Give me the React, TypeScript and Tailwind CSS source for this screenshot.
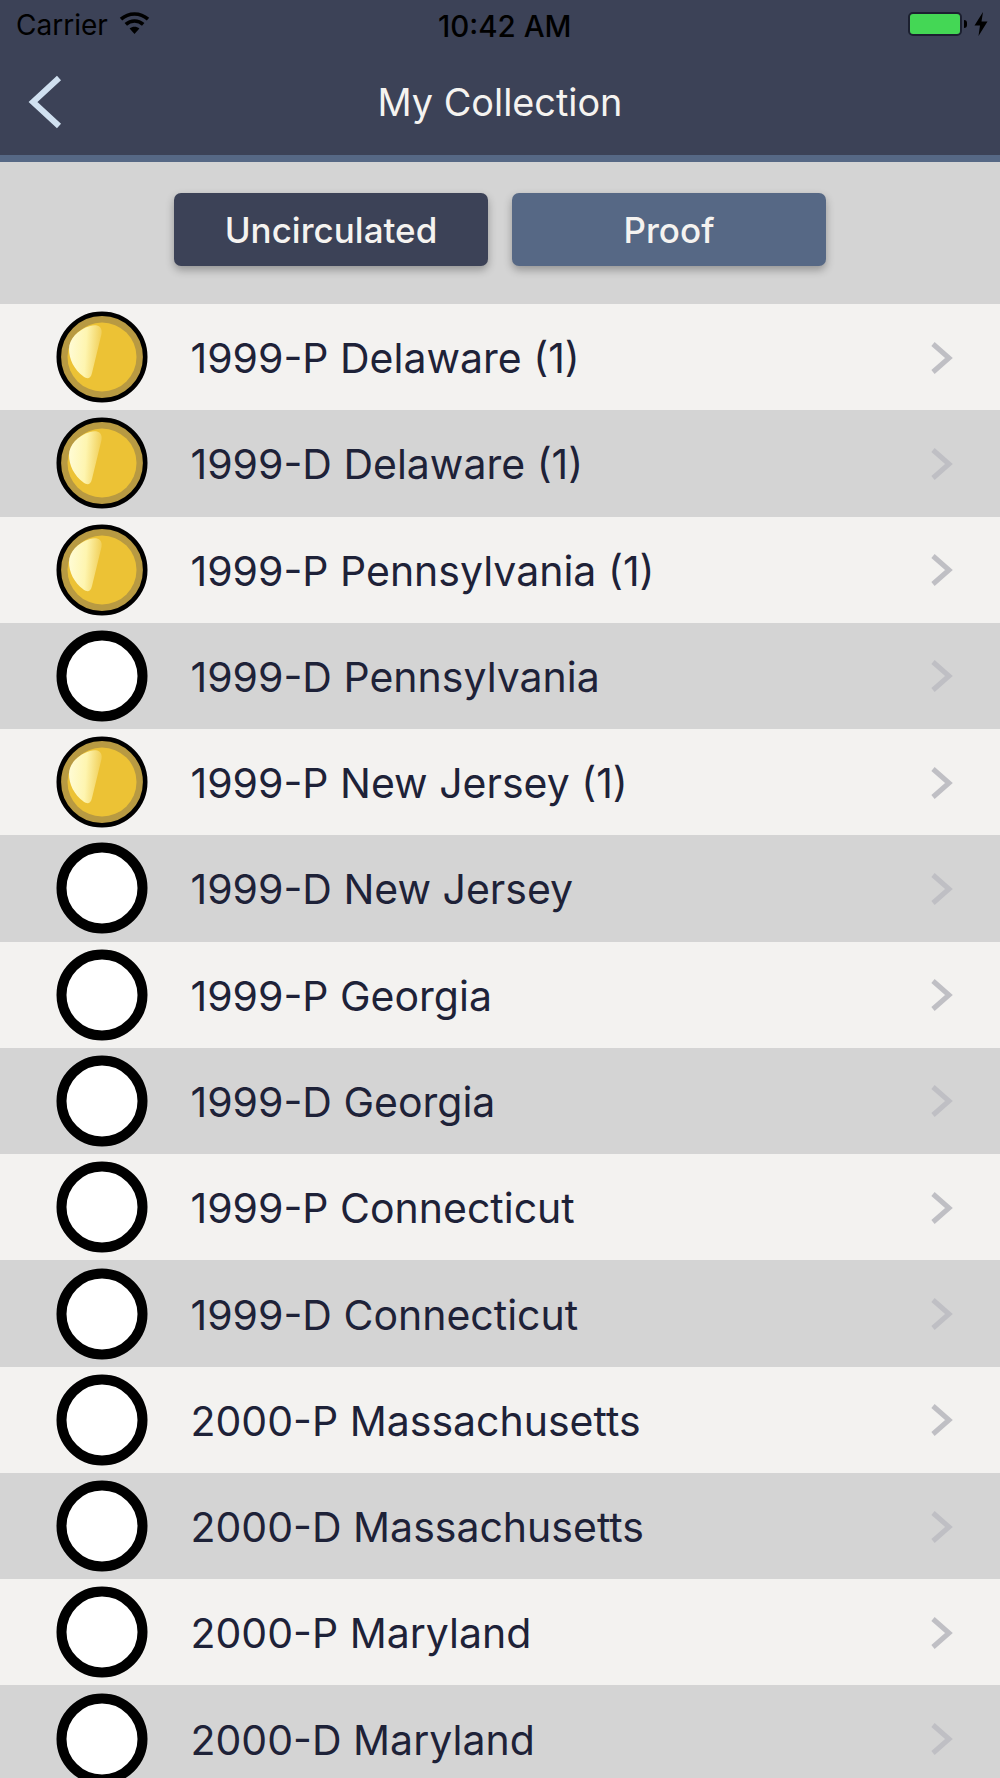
import React from "react";

const rows: [string, boolean][] = [
  ["1999-P Delaware (1)", true],
  ["1999-D Delaware (1)", true],
  ["1999-P Pennsylvania (1)", true],
  ["1999-D Pennsylvania", false],
  ["1999-P New Jersey (1)", true],
  ["1999-D New Jersey", false],
  ["1999-P Georgia", false],
  ["1999-D Georgia", false],
  ["1999-P Connecticut", false],
  ["1999-D Connecticut", false],
  ["2000-P Massachusetts", false],
  ["2000-D Massachusetts", false],
  ["2000-P Maryland", false],
  ["2000-D Maryland", false],
];

function Coin({ filled, id }: { filled: boolean; id: string }) {
  if (!filled) {
    return (
      <svg width="92" height="92" viewBox="0 0 92 92" className="shrink-0">
        <circle cx="46" cy="46" r="40.5" fill="#fff" stroke="#000" strokeWidth="10" />
      </svg>
    );
  }
  return (
    <svg width="92" height="92" viewBox="0 0 92 92" className="shrink-0">
      <defs>
        <linearGradient id={id} x1="0" y1="0" x2="1" y2="0.1">
          <stop offset="0" stopColor="#fffcd8" />
          <stop offset="0.55" stopColor="#fef5b0" />
          <stop offset="1" stopColor="#f1d05a" />
        </linearGradient>
      </defs>
      <circle cx="46" cy="46" r="43.2" fill="#b89a42" stroke="#000" strokeWidth="4.6" />
      <circle cx="46" cy="46" r="34.5" fill="#ecc235" />
      <path
        d="M34 15 C40 13 47 14.5 45.5 23 L36 62 C34.5 68.5 31 68 27.5 65.5 C18 58.5 13 48 13 38 C13 28 22 18.5 34 15 Z"
        fill={`url(#${id})`}
      />
    </svg>
  );
}

export default function App() {
  return (
    <div
      className="relative w-[1000px] h-[1778px] overflow-hidden bg-[#d4d4d4]"
      style={{ fontFamily: "Inter, 'Liberation Sans', sans-serif" }}
    >
      <header className="bg-[#3c4257] border-b-[7px] border-[#566885] h-[162px]">
        <div className="h-[48px] relative flex items-center justify-between pl-[16px] pr-[12px] text-black">
          <div className="flex items-center gap-[11px]">
            <span className="text-[28px] leading-none mt-[2px]">Carrier</span>
            <svg width="31" height="22" viewBox="0 0 31 22" className="mt-[-3px]">
              <path d="M15.5 22 L10.6 16.6 C13.4 14.2 17.6 14.2 20.4 16.6 Z" fill="#000" />
              <path d="M6.8 12.4 C11.8 7.8 19.2 7.8 24.2 12.4" fill="none" stroke="#000" strokeWidth="3.6" />
              <path d="M2 7.2 C9.8 0.2 21.2 0.2 29 7.2" fill="none" stroke="#000" strokeWidth="3.6" />
            </svg>
          </div>
          <span className="absolute left-[438px] top-[11px] text-[29.5px] leading-[30px] font-medium whitespace-nowrap">10:42 AM</span>
          <div className="flex items-center">
            <div className="w-[54px] h-[24px] rounded-[5px] border-[2px] border-[#1c2030] bg-[#44d755]" />
            <div className="w-[3px] h-[8px] ml-[2px] rounded-r-[3px] bg-black" />
            <svg width="14" height="24" viewBox="0 0 14 24" className="ml-[7px]">
              <path d="M9 0 L0.5 13.5 H6 L4.5 24 L13.5 9.5 H7.5 Z" fill="#000" />
            </svg>
          </div>
        </div>
        <div className="h-[107px] relative flex items-center justify-center">
          <svg width="36" height="54" viewBox="0 0 36 54" className="absolute left-[27px] top-[27px]">
            <path d="M32 3 L6 27 L32 51" fill="none" stroke="#d0e0f0" strokeWidth="6" strokeLinejoin="miter" />
          </svg>
          <h1 className="text-[37.8px] leading-none font-normal text-[#f5f3f0] mt-[2px]">My Collection</h1>
        </div>
      </header>

      <div className="h-[142px] flex justify-center gap-[24px] pt-[31px]">
        <button className="w-[314px] h-[73px] pt-[2px] rounded-[7px] bg-[#3c4257] text-[#f5f3f0] text-[35px] font-medium shadow-[0_4px_8px_rgba(0,0,0,0.3)]">
          Uncirculated
        </button>
        <button className="w-[314px] h-[73px] pt-[2px] rounded-[7px] bg-[#566885] text-[#f5f3f0] text-[35px] font-medium shadow-[0_4px_8px_rgba(0,0,0,0.3)]">
          Proof
        </button>
      </div>

      <ul>
        {rows.map(([label, filled], i) => (
          <li
            key={label}
            className={`h-[106.28px] flex items-center pl-[55.5px] pr-[46px] ${i % 2 === 0 ? "bg-[#f3f2f0]" : "bg-[#d4d4d4]"}`}
          >
            <Coin filled={filled} id={`coin-${i}`} />
            <span className="ml-[43px] mt-[3px] flex-1 text-[41px] leading-none text-[#1e2238]">{label}</span>
            <svg width="24" height="34" viewBox="0 0 24 34" className="shrink-0 mt-[1px]">
              <path d="M3 3 L19 17 L3 31" fill="none" stroke="#bfbfc4" strokeWidth="5" />
            </svg>
          </li>
        ))}
      </ul>
    </div>
  );
}
